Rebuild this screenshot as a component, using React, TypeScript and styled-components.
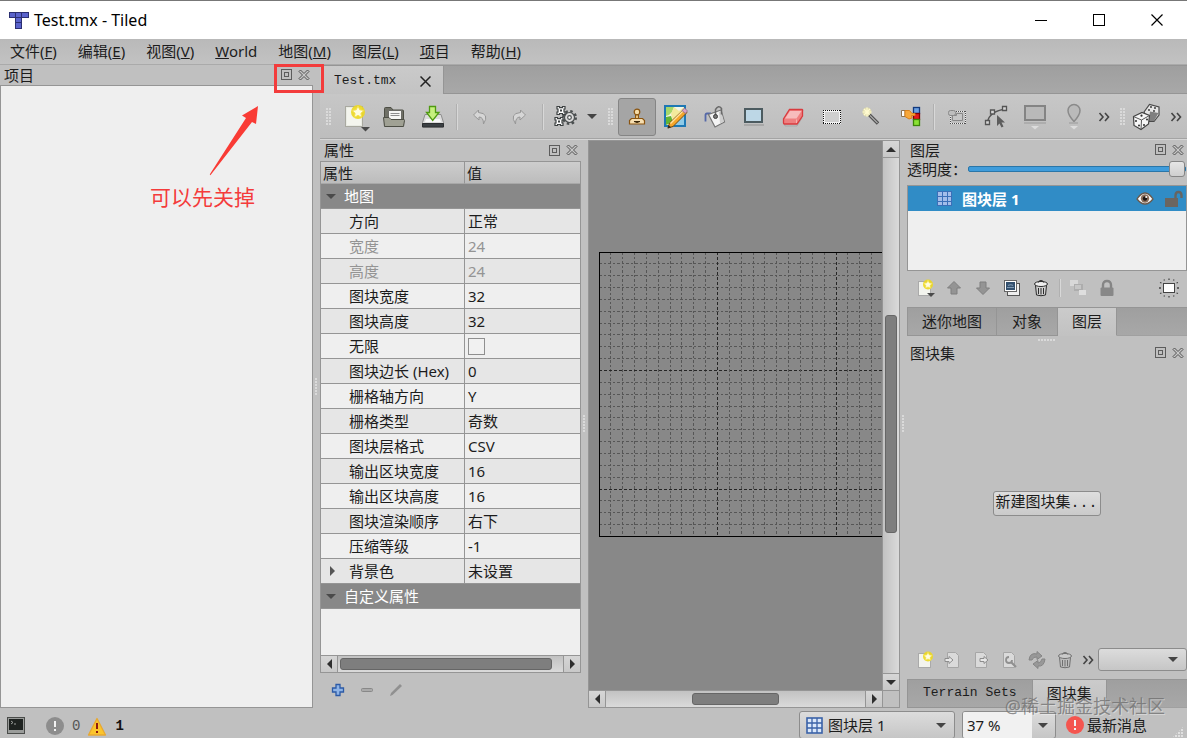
import React from "react";
import styled, { createGlobalStyle, css } from "styled-components";

const ui = `"Noto Sans", "Noto Sans CJK SC", sans-serif`;
const mono = `"Liberation Mono", "Noto Sans CJK SC", monospace`;
const c = {
  bg: "#c0c0c0",
  line: "#959595",
  dark: "#878787",
  text: "#1c1c1c",
  paper: "#efefef",
  blue: "#308cc6",
};

const Global = createGlobalStyle`
  * { box-sizing: border-box; }
  body { margin: 0; background: ${c.bg}; color: ${c.text}; font: 15px/20px ${ui}; }
  button, input, select { font: inherit; color: inherit; margin: 0; padding: 0; border: 0; background: none; border-radius: 0; }
  svg { display: block; flex: none; }
`;

/* ---------- window frame ---------- */
const Window = styled.div`
  display: flex;
  flex-direction: column;
  height: 100vh;
  overflow: hidden;
  position: relative;
`;
const TitleBar = styled.header`
  display: flex;
  align-items: center;
  flex: none;
  height: 39px;
  padding: 0 1px 0 9px;
  border-top: 1px solid #777;
  background: #fff;
  color: #000;
`;
const Caption = styled.h1`
  flex: 1;
  margin: 0 0 0 5px;
  font: 16px/20px ${ui};
`;
const CaptionButton = styled.button`
  display: flex;
  align-items: center;
  justify-content: center;
  width: 58px;
  height: 36px;
`;
const MenuBar = styled.nav`
  display: flex;
  align-items: center;
  flex: none;
  gap: 21px;
  height: 26px;
  padding: 0 10px 2px;
  background: linear-gradient(#b9b9b9, #c2c2c2);
  border-bottom: 1px solid #aaa;
`;
const MenuItem = styled.button`
  height: 22px;
  white-space: nowrap;
`;
const Main = styled.main`
  display: flex;
  flex: 1;
  min-height: 0;
  position: relative;
`;
const Splitter = styled.div<{ $w: number }>`
  flex: none;
  width: ${(p) => p.$w}px;
  display: flex;
  align-items: center;
  justify-content: center;
`;
const Dots = styled.span<{ $w: number; $h: number }>`
  flex: none;
  width: ${(p) => p.$w}px;
  height: ${(p) => p.$h}px;
  background: radial-gradient(circle at 1px 1px, #dadada 1px, transparent 1px) 0 0 / 3px 3px;
`;

/* ---------- docks ---------- */
const Dock = styled.section<{ $w: number }>`
  display: flex;
  flex-direction: column;
  min-height: 0;
  flex: none;
  width: ${(p) => p.$w}px;
`;
const DockTitle = styled.div<{ $h?: number }>`
  display: flex;
  align-items: center;
  flex: none;
  height: ${(p) => p.$h ?? 20}px;
  padding: 0 1px 1px 4px;
`;
const DockName = styled.h2`
  flex: 1;
  margin: 0;
  font: inherit;
`;
const DockButton = styled.button`
  display: flex;
  align-items: center;
  justify-content: center;
  width: 17px;
  height: 16px;
`;
const ProjectBody = styled.div`
  flex: 1;
  background: ${c.paper};
  border: 1px solid ${c.line};
`;
const Editor = styled.div`
  display: flex;
  flex-direction: column;
  flex: 1;
  min-width: 0;
`;
const Work = styled.div`
  display: flex;
  flex: 1;
  min-height: 0;
`;

/* ---------- tabs ---------- */
const TabStrip = styled.div<{ $flip?: boolean }>`
  display: flex;
  flex: none;
  height: 29px;
  background: linear-gradient(#9f9f9f, #a8a8a8);
  border-top: 1px solid ${c.line};
  border-bottom: ${(p) => (p.$flip ? "0" : "1px")} solid ${c.line};
`;
const DocTab = styled.div`
  display: flex;
  align-items: center;
  gap: 21px;
  height: 28px;
  padding: 2px 9px 0 14px;
  background: linear-gradient(#cacaca, #c3c3c3);
  border-right: 1px solid ${c.line};
  font: 13px/20px ${mono};
`;
const Tab = styled.button<{ $on?: boolean; $mono?: boolean; $pad: number }>`
  height: 28px;
  padding: 0 ${(p) => p.$pad}px 2px;
  border-right: 1px solid ${c.line};
  border-bottom: 1px solid ${c.line};
  ${(p) => p.$mono && css`font: 13px/20px ${mono};`}
  ${(p) =>
    p.$on &&
    css`
      background: linear-gradient(#cbcbcb, #c2c2c2);
      border-bottom-color: #c2c2c2;
    `}
`;
const TabFill = styled.span`
  flex: 1;
  border-bottom: 1px solid #a0a0a0;
`;

/* ---------- toolbars ---------- */
const ToolBar = styled.div`
  display: flex;
  align-items: center;
  flex: none;
  gap: 1px;
  height: 46px;
  padding-left: 6px;
  overflow: hidden;
  background: linear-gradient(#c7c7c7, #bdbdbd);
  border-bottom: 1px solid #d6d6d6;
  box-shadow: inset 0 -1px #a4a4a4;
`;
const SmallBar = styled.div<{ $h: number; $left: number }>`
  display: flex;
  align-items: center;
  flex: none;
  gap: 1px;
  height: ${(p) => p.$h}px;
  padding: 0 0 2px ${(p) => p.$left}px;
`;
const ToolButton = styled.button<{ $w?: number; $h?: number; $on?: boolean }>`
  display: flex;
  align-items: center;
  justify-content: center;
  flex: none;
  width: ${(p) => p.$w ?? 38}px;
  height: ${(p) => p.$h ?? 38}px;
  border-radius: 3px;
  ${(p) => p.$on && css`background: #a5a5a5; border: 1px solid #858585;`}
`;
const Sep = styled.span<{ $h?: number }>`
  flex: none;
  width: 7px;
  height: ${(p) => p.$h ?? 26}px;
  background: linear-gradient(90deg, #b0b0b0 1px, #d8d8d8 1px) center / 2px 100% no-repeat;
`;
const GripSlot = styled.span<{ $w: number }>`
  display: flex;
  flex: none;
  width: ${(p) => p.$w}px;
`;
const Spacer = styled.span`
  flex: 1;
`;

/* ---------- properties ---------- */
const PropFrame = styled.div`
  display: flex;
  flex-direction: column;
  flex: 1;
  min-height: 0;
  background: ${c.paper};
  border: 1px solid ${c.line};
`;
const PropTable = styled.table`
  width: 100%;
  border-spacing: 0;
  table-layout: fixed;
`;
const HeadCell = styled.th<{ $w?: number }>`
  width: ${(p) => (p.$w ? p.$w + "px" : "auto")};
  height: 22px;
  padding: 2px 2px 0;
  text-align: left;
  font-weight: 400;
  line-height: 19px;
  background: linear-gradient(#cdcdcd, #bcbcbc);
  border-right: ${(p) => (p.$w ? "1px" : "0")} solid ${c.line};
  border-bottom: 1px solid #a8a8a8;
`;
const GroupCell = styled.th`
  height: 25px;
  padding: 0 0 0 5px;
  text-align: left;
  font-weight: 400;
  color: #fff;
  background: #888;
  border-bottom: 1px solid ${c.line};
`;
const CellRow = styled.span`
  display: flex;
  align-items: center;
  gap: 8px;
`;
const Cell = styled.td<{ $name?: boolean; $off?: boolean; $alt?: boolean }>`
  height: 25px;
  padding: 0 0 0 ${(p) => (p.$name ? 9 : 3)}px;
  white-space: nowrap;
  color: ${(p) => (p.$off ? "#949494" : c.text)};
  background: ${(p) => (p.$alt ? "#e6e6e6" : c.paper)};
  border-bottom: 1px solid ${c.line};
  border-right: ${(p) => (p.$name ? "1px" : "0")} solid ${c.line};
`;
const NameLabel = styled.span<{ $indent: boolean }>`
  display: flex;
  align-items: center;
  gap: 14px;
  padding-left: ${(p) => (p.$indent ? 19 : 0)}px;
`;
const Check = styled.input`
  appearance: none;
  display: block;
  width: 17px;
  height: 17px;
  border: 1px solid #8f8f8f;
  background: #f1f1f1;
`;

/* ---------- scroll bars ---------- */
const Bar = styled.div<{ $v?: boolean }>`
  display: flex;
  flex: none;
  flex-direction: ${(p) => (p.$v ? "column" : "row")};
  ${(p) => (p.$v ? "width: 17px;" : "height: 17px;")}
  background: linear-gradient(${(p) => (p.$v ? "90deg" : "180deg")}, #c2c2c2, #dadada);
  border-${(p) => (p.$v ? "left" : "top")}: 1px solid ${c.line};
`;
const BarButton = styled.button<{ $v?: boolean; $end?: boolean }>`
  display: flex;
  align-items: center;
  justify-content: center;
  flex: none;
  width: ${(p) => (p.$v ? "auto" : "17px")};
  height: ${(p) => (p.$v ? "17px" : "auto")};
  background: linear-gradient(#d6d6d6, #c8c8c8);
  border: 0 solid ${c.line};
  border-${(p) => (p.$v ? (p.$end ? "top" : "bottom") : p.$end ? "left" : "right")}-width: 1px;
`;
const BarSpace = styled.span<{ $n: number }>`
  flex: ${(p) => p.$n} 1 0;
`;
const Thumb = styled.span<{ $n: number }>`
  flex: ${(p) => p.$n} 1 0;
  margin: 2px;
  background: #7e7e7e;
  border: 1px solid #666;
  border-radius: 3px;
`;

/* ---------- map view ---------- */
const MapView = styled.section`
  display: flex;
  flex-direction: column;
  flex: 1;
  min-width: 0;
  border: 1px solid ${c.line};
`;
const MapRow = styled.div`
  display: flex;
  flex: 1;
  min-height: 0;
`;
const MapCanvas = styled.div`
  flex: 1;
  min-width: 0;
  overflow: hidden;
  padding: 111px 0 0 10px;
  background: #888;
`;
const MapFoot = styled.div`
  display: flex;
  & > :first-child { flex: 1; }
`;
const Corner = styled.span`
  width: 17px;
  border: solid ${c.line};
  border-width: 1px 0 0 1px;
`;

/* ---------- layers ---------- */
const OpacityRow = styled.label`
  display: flex;
  align-items: center;
  flex: none;
  gap: 1px;
  height: 18px;
  padding: 0 1px;
`;
const Range = styled.input`
  appearance: none;
  flex: 1;
  min-width: 0;
  height: 18px;
  &::-webkit-slider-runnable-track {
    height: 6px;
    background: #3f9cdb;
    border: 1px solid #2a76a8;
    border-radius: 2px;
  }
  &::-webkit-slider-thumb {
    appearance: none;
    width: 16px;
    height: 16px;
    margin-top: -6px;
    background: linear-gradient(#e6e6e6, #cfcfcf);
    border: 1px solid #858585;
    border-radius: 3px;
  }
`;
const LayerList = styled.div`
  flex: none;
  height: 86px;
  margin: 7px 0 0 1px;
  background: ${c.paper};
  border: 1px solid ${c.line};
`;
const LayerRow = styled.div`
  display: flex;
  align-items: center;
  height: 25px;
  padding: 0 3px 0 29px;
  gap: 10px;
  color: #fff;
  background: ${c.blue};
  font-weight: 700;
`;
const LayerName = styled.span`
  flex: 1;
`;
const TabInset = styled.div<{ $top?: number }>`
  flex: none;
  margin: ${(p) => p.$top ?? 0}px 0 0 1px;
  border-left: 1px solid ${c.line};
`;
const HandleRow = styled.div`
  display: flex;
  justify-content: center;
  flex: none;
  height: 7px;
  padding-top: 3px;
`;
const TilesetArea = styled.div`
  display: flex;
  align-items: center;
  justify-content: center;
  flex: 1;
`;
const PushButton = styled.button`
  width: 108px;
  height: 25px;
  white-space: nowrap;
  background: linear-gradient(#dedede, #cacaca);
  border: 1px solid #8c8c8c;
  border-radius: 3px;
  font-family: ${mono};
`;
const Combo = styled.label<{ $w?: number; $h: number }>`
  display: flex;
  align-items: center;
  flex: ${(p) => (p.$w ? "none" : "1")};
  width: ${(p) => (p.$w ? p.$w + "px" : "auto")};
  height: ${(p) => p.$h}px;
  gap: 5px;
  padding: 0 8px 0 6px;
  background: linear-gradient(#dcdcdc, #c6c6c6);
  border: 1px solid #8c8c8c;
  border-radius: 3px;
`;
const Select = styled.select`
  appearance: none;
  flex: 1;
  min-width: 0;
  outline: 0;
`;

/* ---------- status bar ---------- */
const StatusBar = styled.footer`
  display: flex;
  align-items: center;
  flex: none;
  height: 30px;
  padding: 4px 3px 0 5px;
`;
const StatusButton = styled.button<{ $ml?: number }>`
  display: flex;
  align-items: center;
  gap: 8px;
  height: 26px;
  padding-top: 2px;
  margin-left: ${(p) => p.$ml ?? 0}px;
`;
const Count = styled.span<{ $on?: boolean }>`
  font: ${(p) => (p.$on ? 700 : 400)} 14px/20px ${mono};
  color: ${(p) => (p.$on ? "#111" : "#555")};
`;
const ZoomBox = styled.div`
  display: flex;
  width: 94px;
  height: 28px;
  margin-left: 7px;
  border: 1px solid #8c8c8c;
  border-radius: 3px;
  overflow: hidden;
  background: linear-gradient(#dcdcdc, #c6c6c6);
`;
const ZoomInput = styled.input`
  width: 69px;
  padding-left: 4px;
  background: #f1f1f1;
  outline: 0;
`;
const ZoomDrop = styled.button`
  display: flex;
  flex: 1;
  align-items: center;
  justify-content: center;
`;
const News = styled.a`
  display: flex;
  align-items: center;
  gap: 3px;
  margin-left: 10px;
  color: inherit;
  text-decoration: none;
  white-space: nowrap;
`;
const SizeGrip = styled.span`
  align-self: flex-end;
  width: 12px;
  height: 12px;
  clip-path: polygon(100% 0, 100% 100%, 0 100%);
  background: radial-gradient(circle at 1px 1px, #e0e0e0 1px, transparent 1px) 0 0 / 3px 3px;
`;

/* ---------- annotations ---------- */
const RedBox = styled.div`
  position: absolute;
  left: 274px;
  top: -1px;
  width: 50px;
  height: 29px;
  border: 3px solid #f33c3c;
`;
const RedArrow = styled.div`
  position: absolute;
  left: 208px;
  top: 41px;
`;
const RedText = styled.p`
  position: absolute;
  left: 150px;
  top: 117px;
  margin: 0;
  font-size: 21px;
  line-height: 30px;
  color: #f43b3b;
`;
const Watermark = styled.div`
  position: absolute;
  right: 22px;
  bottom: 20px;
  font-size: 18px;
  line-height: 24px;
  color: rgba(110, 110, 110, 0.75);
  text-shadow: 1px 1px 0 rgba(255, 255, 255, 0.35);
  pointer-events: none;
`;

/* ---------- icons ---------- */
const Svg = ({ s = 24, w, h, children }: { s?: number; w?: number; h?: number; children: React.ReactNode }) => (
  <svg width={w ?? s} height={h ?? s} viewBox={`0 0 ${w ?? s} ${h ?? s}`} fill="none" aria-hidden="true">
    {children}
  </svg>
);
const Tri = ({ dir, s = 5, color = "#2e2e2e" }: { dir: "up" | "down" | "left" | "right"; s?: number; color?: string }) => {
  const v = dir === "up" || dir === "down";
  const d = { up: `M0 ${s}h${2 * s}l-${s}-${s}z`, down: `M0 0h${2 * s}l-${s} ${s}z`, left: `M${s} 0v${2 * s}l-${s}-${s}z`, right: `M0 0v${2 * s}l${s}-${s}z` }[dir];
  return (
    <Svg w={v ? 2 * s : s} h={v ? s : 2 * s}>
      <path d={d} fill={color} />
    </Svg>
  );
};
const TiledLogo = () => (
  <Svg w={20} h={17}>
    <path d="M0 0h20v6h-7v11H6V6H0z" fill="#2b2f72" />
    <path d="M1 1h5v4H1zM7 1h5v4H7zM13 1h6v4h-6zM7 6h5v4H7zM7 11h5v5H7z" fill="#5a63cc" />
  </Svg>
);
const FloatIcon = () => (
  <Svg s={11}>
    <rect x=".5" y=".5" width="10" height="10" stroke="#5c5c5c" />
    <rect x="3.5" y="3.5" width="4" height="4" stroke="#5c5c5c" />
  </Svg>
);
const CloseIcon = () => (
  <Svg s={12}>
    <path d="M1 2.500L2.500 1 6 4.500 9.500 1 11 2.500 7.500 6 11 9.500 9.500 11 6 7.500 2.500 11 1 9.500 4.500 6z" stroke="#505050" fill="#c8c8c8" />
  </Svg>
);
const Star = ({ x, y, r = 7 }: { x: number; y: number; r?: number }) => (
  <g transform={`translate(${x} ${y}) scale(${r / 7})`}>
    <circle r="7" fill="#ecd820" opacity=".9" />
    <path d="M0-6L1.8-2.2 6-1.6 2.9 1.3 3.7 5.4 0 3.4-3.7 5.4-2.9 1.3-6-1.6-1.8-2.2z" fill="#fffde0" stroke="#f4e04a" strokeWidth="1" />
  </g>
);
const NewIcon = () => (
  <Svg w={30} h={30}>
    <rect x="5.500" y="4.500" width="17" height="20" fill="#e9ebe4" stroke="#a9a9a0" />
    <rect x="7" y="6" width="14" height="17" fill="#f4f5ee" />
    <Star x={18} y={10} />
    <path d="M21 25h9l-4.500 4.500z" fill="#4a4a4a" />
  </Svg>
);
const OpenIcon = () => (
  <Svg s={24}>
    <path d="M2.500 20V3.500q0-1 1-1H9l2 2.500h9.500q1 0 1 1V20z" fill="#6f7066" stroke="#4d4e45" />
    <path d="M6.500 5.500h13V16h-13z" fill="#f6f6f4" stroke="#6b6b66" />
    <path d="M8.500 8.500h9M8.500 10.500h9" stroke="#8d8d8d" />
    <path d="M1.500 12.500H7l2 2h13q.5 0 .5 1l-1 6h-19z" fill="#a0a194" stroke="#4d4e45" />
  </Svg>
);
const SaveIcon = () => (
  <Svg s={24}>
    <path d="M4 9.500h16l2.500 8v4.500h-21v-4.500z" fill="#dcdcdc" stroke="#8d8d8d" />
    <path d="M1.500 18.500h21v3.500h-21z" fill="#3b4044" stroke="#2c2f31" />
    <path d="M5 14l-1 3h16l-1-3z" fill="#f8f8f8" />
    <path d="M8.500 1.500h6v6H18l-6.300 8L5.500 7.500h3z" fill="#c6f07e" stroke="#4f9a12" strokeWidth="1.300" />
  </Svg>
);
const UndoIcon = ({ flip }: { flip?: boolean }) => (
  <Svg s={20}>
    <path
      transform={flip ? "matrix(-1 0 0 1 20 0)" : undefined}
      d="M8.500 3L3.500 8l5.500 5v-3q4.500 0 4.500 7 6.500-10.500-5-11.500z"
      fill="#d6d6d6"
      stroke="#979797"
    />
  </Svg>
);
const Gear = ({ x, y, r }: { x: number; y: number; r: number }) => (
  <g transform={`translate(${x} ${y})`}>
    <circle r={r + 0.5} stroke="#4b4f50" strokeWidth="3" strokeDasharray={`${((r + 0.5) * Math.PI) / 8} ${((r + 0.5) * Math.PI) / 8}`} />
    <circle r={r - 0.5} fill="#dadada" stroke="#4b4f50" strokeWidth="1.2" />
    <circle r={r / 3} fill="#fff" stroke="#4b4f50" strokeWidth="1.2" />
  </g>
);
const GearsIcon = () => (
  <Svg s={24}>
    <Gear x={15.500} y={12.500} r={5.500} />
    {[[7, 5.5], [5, 16.5]].map(([x, y]) => (
      <g key={x} transform={`translate(${x} ${y})`}>
        <path d="M-4-4h2.500v1.200h3V-4H4v2.500H3v3h1V4H1.500V3h-3v1H-4V1.500h1v-3h-1z" fill="#fff" stroke="#3d4142" strokeWidth="1.200" />
        <rect x="-1" y="-1" width="2" height="2" fill="#3d4142" />
      </g>
    ))}
  </Svg>
);
const StampIcon = () => (
  <Svg s={18}>
    <circle cx="9" cy="4" r="2.800" fill="#f5dca8" stroke="#8a5410" strokeWidth="1.200" />
    <path d="M7.500 7h3v3.500h-3z" fill="#e7c27c" stroke="#8a5410" />
    <path d="M3.500 10.500h11l2 2v3.500h-15v-3.500z" fill="#f6deb0" stroke="#8a5410" strokeWidth="1.200" />
    <path d="M6 13.500h6l-3 1z" fill="#3a2608" stroke="#3a2608" />
  </Svg>
);
const TerrainIcon = () => (
  <Svg s={26}>
    <rect x="2" y="2" width="20" height="20" fill="#f3f6ea" stroke="#1e78b4" strokeWidth="2" />
    <path d="M3 3h8L9 8 6 11l-3 1z" fill="#a6d86a" />
    <path d="M11 3l5 4 5-4v7l-6 2-5 5-2-7z" fill="#f3ea9d" />
    <path d="M3 13l5-1 2 6-7 3z" fill="#63b434" />
    <path d="M12 15l9-3v9H10z" fill="#8fcbe8" />
    <path d="M5 24l1.500-5L20.500 5.500l3.500 3L10 22.500z" fill="#f5a62b" stroke="#7a4a08" />
    <path d="M7.500 19.500L20 7" stroke="#ffe3a0" strokeWidth="1.500" />
    <path d="M19 6.500l2.500-2.500 3 3-2.200 2.500z" fill="#d8a2c8" stroke="#8d6a86" strokeWidth=".8" />
    <path d="M4.500 24.500l1-3.500 2.500 2.200z" fill="#2a2a2a" />
  </Svg>
);
const BucketIcon = () => (
  <Svg s={24}>
    <path d="M8 8.500H4Q2.500 8.500 2.500 10v6.500" stroke="#5468a8" strokeWidth="1.800" />
    <path d="M5.500 9.500L18 5l3.500 12-9.500 5z" fill="#f4f4f4" stroke="#757575" strokeWidth="1.200" />
    <path d="M16 7l2-1 3 10.500-4 2z" fill="#cfcfcf" />
    <path d="M12.500 11.500V4.500Q15.500-.5 18.500 3.500v6" stroke="#6a6a6a" strokeWidth="1.500" />
    <circle cx="12.500" cy="11.500" r="2" fill="#777" stroke="#3f3f3f" />
  </Svg>
);
const RectIcon = () => (
  <Svg s={22}>
    <rect x="1" y="18" width="20" height="2" fill="#8f8f8f" opacity=".5" />
    <rect x="2" y="3" width="17" height="13" fill="#bdd7e6" stroke="#4c5b60" strokeWidth="2" />
  </Svg>
);
const EraserIcon = () => (
  <Svg s={22}>
    <path d="M2 17.500l1 2.500h12l5-8" stroke="#909090" opacity=".5" />
    <path d="M7.500 3.500h12.500q1 0 .5 1.500v5L15 18H2.500q-1 0-1-1v-4z" fill="#ef8080" stroke="#d93a3e" strokeWidth="1.300" />
    <path d="M8 5h11.500L14.500 12.500H3z" fill="#f7bcbc" />
    <path d="M14.500 13.500V17" stroke="#f8b0b0" />
  </Svg>
);
const MarqueeIcon = () => (
  <Svg s={20}>
    <rect x="2" y="4" width="16" height="12" fill="#cfcfcf" stroke="#f4f4f4" strokeWidth="2" />
    <path d="M1 3.500h18M1 16.500h18M1.500 3v14M18.500 3v14" stroke="#111" strokeDasharray="1 1" />
  </Svg>
);
const WandIcon = () => (
  <Svg s={20}>
    <circle cx="6" cy="5" r="4.500" fill="#f5efa0" opacity=".6" />
    <path d="M6 .5v9M1.500 5h9M3 2l6 6M9 2L3 8" stroke="#fffbd0" strokeWidth="1.200" />
    <path d="M8.500 8l8.500 8.500" stroke="#4b4b4b" strokeWidth="3.400" />
    <path d="M9 8.500l7.500 7.500" stroke="#ababab" strokeWidth="1.200" />
  </Svg>
);
const HandIcon = () => (
  <Svg s={22}>
    <rect x="14.500" y="1.500" width="6" height="6" fill="#6ba0e2" stroke="#12397e" strokeWidth="1.300" />
    <rect x="14.500" y="7.500" width="6" height="6" fill="#e2191c" stroke="#7e0000" strokeWidth="1.300" />
    <rect x="14.500" y="13.500" width="6" height="6" fill="#8be234" stroke="#3d8508" strokeWidth="1.300" />
    <path d="M2.500 4.500H6v6H2.500z" fill="#fff" stroke="#8d7350" />
    <path d="M6 4.500h4.500l2.500 3h3v2h-3.500l.5 2.500-3 1-4-2.500z" fill="#f7a73a" stroke="#d9811a" />
  </Svg>
);
const SelObjIcon = () => (
  <Svg s={22}>
    <path d="M4 5.500h16M4 17.500h16M4.500 5v13M19.500 5v13" stroke="#ececec" />
    <path d="M4 5.500h16M4 17.500h16M4.500 5v13M19.500 5v13" stroke="#505050" strokeDasharray="1 1" />
    <path d="M6.500 14.500v-5h4v-2h6v7z" fill="#c6c6c6" stroke="#888" />
    <rect x="2.500" y="4.500" width="7" height="5" rx="2" fill="#bebebe" stroke="#888" />
  </Svg>
);
const NodesIcon = () => (
  <Svg s={24}>
    <path d="M3.500 17Q5 7 21 4" stroke="#555" strokeWidth="1.300" />
    <path d="M1.500 15.500h4v4h-4zM6.500 5h4v4h-4zM18.500 1.500h4v4h-4z" fill="#d6d6d6" stroke="#555" strokeWidth="1.300" />
    <path d="M13 10v11l2.500-2.500 2 4 2-1-2-4H21z" fill="#5d5d5d" />
  </Svg>
);
const ScreenIcon = () => (
  <Svg w={24} h={30}>
    <path d="M1 21h22" stroke="#adadad" strokeWidth="2" />
    <rect x="2" y="4" width="20" height="14" fill="#b9b9b9" stroke="#848484" strokeWidth="2" />
    <path d="M8 24h8l-4 3.500z" fill="#dcdcdc" />
  </Svg>
);
const PinIcon = () => (
  <Svg w={24} h={30}>
    <path d="M12 19.500Q6 13 6 8.500a6 6 0 0 1 12 0Q18 13 12 19.500z" fill="#bababa" stroke="#8a8a8a" strokeWidth="1.500" />
    <path d="M7 21h9" stroke="#adadad" strokeWidth="2" />
    <path d="M8 24h8l-4 3.500z" fill="#dcdcdc" />
  </Svg>
);
const DiceIcon = () => (
  <Svg s={28}>
    <path d="M12 9l5.500-7.500 9.500 2.500v8l-5 6.500-5 0z" fill="#e6e6e6" stroke="#4a4a4a" strokeWidth="1.200" />
    <path d="M18 8.500l8.500 1.500-4.500 8-5 0z" fill="#7f7f7f" />
    <path d="M1.500 13.500l8.500-4 7.500 3-1 8.500-7.500 5.500-7-4z" fill="#f7f7f7" stroke="#444" strokeWidth="1.200" />
    <path d="M1.500 13.500l8 3.500 8-4.500M9.500 17l-.5 9.500" stroke="#555" />
    <g fill="#2e2e2e">
      <circle cx="9.500" cy="12.700" r="1.100" />
      <circle cx="4" cy="18" r="1" />
      <circle cx="7" cy="22.500" r="1" />
      <circle cx="12" cy="22" r="1" />
      <circle cx="15" cy="16.500" r="1" />
      <circle cx="19" cy="4" r=".9" />
      <circle cx="17" cy="7" r=".9" />
      <circle cx="23" cy="5" r=".9" />
      <circle cx="22" cy="8" r=".9" />
    </g>
  </Svg>
);
const MoreIcon = () => (
  <Svg w={12} h={10}>
    <path d="M1.500 1l3.500 4-3.500 4M7 1l3.500 4L7 9" stroke="#444" strokeWidth="1.600" />
  </Svg>
);
const GridIcon = () => (
  <Svg s={17}>
    <rect x="1" y="1" width="15" height="15" fill="#dbe8fa" stroke="#3a62a8" strokeWidth="1.600" />
    <path d="M6 1v15M11 1v15M1 6h15M1 11h15" stroke="#3a62a8" strokeWidth="1.300" />
  </Svg>
);
const LayerGridIcon = () => (
  <Svg s={15}>
    <rect width="15" height="15" fill="#3b6fb8" />
    <path d="M1 1h4v4H1zM6 1h4v4H6zM11 1h3v4h-3zM1 6h4v4H1zM6 6h4v4H6zM11 6h3v4h-3zM1 11h4v3H1zM6 11h4v3H6zM11 11h3v3h-3z" fill="#a3bdea" />
  </Svg>
);
const EyeIcon = () => (
  <Svg w={18} h={16}>
    <path d="M1 8q8-12 16 0-8 10-16 0z" fill="#fafafa" stroke="#6b5a4c" strokeWidth="1.300" />
    <circle cx="9" cy="7.500" r="4.200" fill="#8a6f5c" />
    <circle cx="9" cy="7.500" r="2.200" fill="#1c1512" />
    <circle cx="10.200" cy="6" r="1" fill="#fff" />
  </Svg>
);
const UnlockIcon = () => (
  <Svg w={19} h={20}>
    <path d="M11.500 11V6.500q0-3.500 3-3.500t3 3.500V9" stroke="#666461" strokeWidth="2.400" />
    <rect x="1" y="9" width="13" height="9" fill="#6b6560" />
  </Svg>
);
const SmallNew = ({ arrow }: { arrow?: boolean }) => (
  <Svg s={20}>
    <rect x="3.500" y="3.500" width="12" height="14" fill="#f3f4ee" stroke="#aaa" />
    <Star x={13} y={6.500} r={5} />
    {arrow && <path d="M12 15h8l-4 4z" fill="#4a4a4a" />}
  </Svg>
);
const ArrowIcon = ({ down }: { down?: boolean }) => (
  <Svg s={18}>
    <path transform={down ? "rotate(180 9 9)" : undefined} d="M9 2.500l6.500 6.500h-3.500v6H6V9H2.500z" fill="#949494" stroke="#7f7f7f" />
  </Svg>
);
const DupIcon = () => (
  <Svg s={18}>
    <rect x="4.500" y="4.500" width="12" height="12" fill="#eee" stroke="#555" />
    <rect x="1.500" y="1.500" width="12" height="11" fill="#fff" stroke="#666" />
    <rect x="3" y="3" width="9" height="8" fill="#33506e" />
    <path d="M4 8.500h7M5 6.500q3-1.500 5 0" stroke="#7f9ab4" strokeWidth="1.200" />
  </Svg>
);
const TrashIcon = ({ dim }: { dim?: boolean }) => (
  <Svg s={18}>
    <g stroke={dim ? "#707070" : "#2b2b2b"} fill={dim ? "#bcbcbc" : "#d0d0d0"}>
      <path d="M3.500 6.500h11l-1 9.500q-4.500 1.500-9 0z" />
      <ellipse cx="9" cy="5" rx="6.500" ry="2.500" fill={dim ? "#cacaca" : "#efefef"} />
      <path d="M6.500 3.500q0-2 2.500-2t2.500 2" fill="none" />
      <path d="M6.500 9v6M9 9v6.500M11.500 9v6" fill="none" />
    </g>
  </Svg>
);
const CopiesIcon = () => (
  <Svg s={18}>
    <path d="M1 1h8v6H1z" fill="#d8d8d8" />
    <path d="M5 5h9v7H5z" fill="#adadad" />
    <path d="M6 6h6v4H6z" fill="#c6c6c6" />
    <path d="M10 11h7v5h-7z" fill="#dedede" />
  </Svg>
);
const LockIcon = () => (
  <Svg s={18}>
    <path d="M5 9V6q0-4 4-4t4 4v3" stroke="#858585" strokeWidth="2.400" />
    <rect x="2.500" y="8.500" width="13" height="8.500" rx="1" fill="#888" />
  </Svg>
);
const HighlightIcon = () => (
  <Svg s={22}>
    <rect x="5.500" y="6.500" width="11" height="9" fill="#fff" stroke="#444" />
    <path d="M11 1.500v1.500M6 2.500l.5 1M16 2.500l-.5 1M2 5.500l1.500.5M20 5.500l-1.500.5M1 11h2M19 11h2M2 16.500l1.500-.5M20 16.500l-1.500-.5M6 19.500l.5-1M16 19.500l-.5-1M11 19v1.500" stroke="#444" strokeWidth="1.300" />
  </Svg>
);
const Page = ({ children }: { children: React.ReactNode }) => (
  <Svg s={18}>
    <path d="M3.500 1.500h8l3 3v12h-11z" fill="#dadada" stroke="#a6a6a6" />
    {children}
  </Svg>
);
const RefreshIcon = () => (
  <Svg s={20}>
    <path d="M2 10Q3 2 10 4V1.500l5 4.500-5 3.500V7Q6 6.500 5 10z" fill="#989898" stroke="#858585" />
    <path d="M18 9q-1 8-7 7v2.500l-5-4.500 5-3.500V13q3 0 4-4z" fill="#989898" stroke="#858585" />
  </Svg>
);
const AlertIcon = ({ color }: { color: string }) => (
  <Svg s={18}>
    <circle cx="9" cy="9" r="9" fill={color} />
    <path d="M9 4v6M9 12v2" stroke="#f2f2f2" strokeWidth="2" />
  </Svg>
);

/* ---------- data ---------- */
type Prop = { name: string; value?: string; off?: boolean; check?: boolean; more?: boolean };
const props: Prop[] = [
  { name: "方向", value: "正常" },
  { name: "宽度", value: "24", off: true },
  { name: "高度", value: "24", off: true },
  { name: "图块宽度", value: "32" },
  { name: "图块高度", value: "32" },
  { name: "无限", check: true },
  { name: "图块边长 (Hex)", value: "0" },
  { name: "栅格轴方向", value: "Y" },
  { name: "栅格类型", value: "奇数" },
  { name: "图块层格式", value: "CSV" },
  { name: "输出区块宽度", value: "16" },
  { name: "输出区块高度", value: "16" },
  { name: "图块渲染顺序", value: "右下" },
  { name: "压缩等级", value: "-1" },
  { name: "背景色", value: "未设置", more: true },
];
const menus: [string, string, string][] = [
  ["文件(", "F", ")"],
  ["编辑(", "E", ")"],
  ["视图(", "V", ")"],
  ["", "W", "orld"],
  ["地图(", "M", ")"],
  ["图层(", "L", ")"],
  ["", "项", "目"],
  ["帮助(", "H", ")"],
];

const DockHeader = ({ name, h }: { name: string; h?: number }) => (
  <DockTitle $h={h}>
    <DockName>{name}</DockName>
    <DockButton aria-label="浮动"><FloatIcon /></DockButton>
    <DockButton aria-label="关闭"><CloseIcon /></DockButton>
  </DockTitle>
);

const ScrollBar = ({ v, parts }: { v?: boolean; parts: [number, number, number] }) => (
  <Bar $v={v}>
    <BarButton $v={v} aria-label="向前"><Tri dir={v ? "up" : "left"} /></BarButton>
    <BarSpace $n={parts[0]} />
    <Thumb $n={parts[1]} />
    <BarSpace $n={parts[2]} />
    <BarButton $v={v} $end aria-label="向后"><Tri dir={v ? "down" : "right"} /></BarButton>
  </Bar>
);

const TILE = 11.85;
const MapGrid = () => {
  const size = Math.round(TILE * 24);
  return (
    <Svg s={size + 1}>
      {Array.from({ length: 23 }, (_, k) => {
        const p = Math.floor(TILE * (k + 1)) + 0.5;
        const major = (k + 1) % 10 === 0;
        return (
          <path
            key={k}
            d={`M${p} 0V${size}M0 ${p}H${size}`}
            stroke={major ? "#262626" : "#565656"}
            strokeDasharray={major ? "3 2" : "3 2 2 2"}
          />
        );
      })}
      <rect x=".5" y=".5" width={size} height={size} stroke="#000" />
    </Svg>
  );
};

export default function App() {
  return (
    <Window>
      <Global />
      <TitleBar>
        <TiledLogo />
        <Caption>Test.tmx - Tiled</Caption>
        <CaptionButton aria-label="最小化"><Svg s={12}><path d="M0 6.500h12" stroke="#000" /></Svg></CaptionButton>
        <CaptionButton aria-label="最大化"><Svg s={12}><rect x=".5" y=".5" width="11" height="11" stroke="#000" /></Svg></CaptionButton>
        <CaptionButton aria-label="关闭窗口"><Svg s={12}><path d="M.5.5l11 11M11.500.5l-11 11" stroke="#000" strokeWidth="1.200" /></Svg></CaptionButton>
      </TitleBar>
      <MenuBar>
        {menus.map(([a, b, d]) => (
          <MenuItem key={a + b + d}>{a}<u>{b}</u>{d}</MenuItem>
        ))}
      </MenuBar>

      <Main>
        <Dock $w={313}>
          <DockHeader name="项目" />
          <ProjectBody />
        </Dock>
        <Splitter $w={7}><Dots $w={3} $h={18} /></Splitter>

        <Editor>
          <TabStrip>
            <DocTab>
              Test.tmx
              <DockButton aria-label="关闭标签"><Svg s={11}><path d="M.5.5l10 10M10.500.5l-10 10" stroke="#222" strokeWidth="1.500" /></Svg></DockButton>
            </DocTab>
          </TabStrip>
          <ToolBar role="toolbar">
            <GripSlot $w={9}><Dots $w={5} $h={18} /></GripSlot>
            <ToolButton aria-label="新建"><NewIcon /></ToolButton>
            <ToolButton aria-label="打开"><OpenIcon /></ToolButton>
            <ToolButton aria-label="保存"><SaveIcon /></ToolButton>
            <Sep />
            <ToolButton aria-label="撤销"><UndoIcon /></ToolButton>
            <ToolButton aria-label="重做"><UndoIcon flip /></ToolButton>
            <Sep />
            <ToolButton aria-label="命令"><GearsIcon /></ToolButton>
            <ToolButton $w={11} aria-label="命令菜单"><Tri dir="down" color="#444" /></ToolButton>
            <GripSlot $w={19}><Spacer /><Dots $w={5} $h={18} /><GripSlot $w={4} /></GripSlot>
            <ToolButton $on aria-label="图章刷"><StampIcon /></ToolButton>
            <ToolButton aria-label="地形刷"><TerrainIcon /></ToolButton>
            <ToolButton aria-label="填充"><BucketIcon /></ToolButton>
            <ToolButton aria-label="矩形"><RectIcon /></ToolButton>
            <ToolButton aria-label="橡皮擦"><EraserIcon /></ToolButton>
            <ToolButton aria-label="矩形选择"><MarqueeIcon /></ToolButton>
            <ToolButton aria-label="魔棒"><WandIcon /></ToolButton>
            <ToolButton aria-label="同色选择"><HandIcon /></ToolButton>
            <Sep />
            <ToolButton aria-label="选择对象"><SelObjIcon /></ToolButton>
            <ToolButton aria-label="编辑多边形"><NodesIcon /></ToolButton>
            <ToolButton aria-label="插入矩形"><ScreenIcon /></ToolButton>
            <ToolButton aria-label="插入点"><PinIcon /></ToolButton>
            <ToolButton $w={20} aria-label="更多工具"><MoreIcon /></ToolButton>
            <GripSlot $w={11}><GripSlot $w={5} /><Dots $w={5} $h={18} /></GripSlot>
            <ToolButton aria-label="随机"><DiceIcon /></ToolButton>
            <ToolButton $w={20} aria-label="更多"><MoreIcon /></ToolButton>
          </ToolBar>

          <Work>
            <Dock $w={261}>
              <DockHeader name="属性" h={21} />
              <PropFrame>
                <PropTable>
                  <thead>
                    <tr><HeadCell $w={144}>属性</HeadCell><HeadCell>值</HeadCell></tr>
                  </thead>
                  <tbody>
                    <tr><GroupCell colSpan={2}><CellRow><Tri dir="down" color="#4a4a4a" /><span>地图</span></CellRow></GroupCell></tr>
                    {props.map((p, i) => (
                      <tr key={p.name}>
                        <Cell $name $off={p.off} $alt={i % 2 === 0}>
                          <NameLabel $indent={!p.more}>
                            {p.more && <Tri dir="right" color="#555" />}
                            {p.check ? <label htmlFor="infinite">{p.name}</label> : <span>{p.name}</span>}
                          </NameLabel>
                        </Cell>
                        <Cell $off={p.off} $alt={i % 2 === 0}>
                          {p.check ? <Check type="checkbox" id="infinite" /> : p.value}
                        </Cell>
                      </tr>
                    ))}
                    <tr><GroupCell colSpan={2}><CellRow><Tri dir="down" color="#4a4a4a" /><span>自定义属性</span></CellRow></GroupCell></tr>
                  </tbody>
                </PropTable>
                <Spacer />
                <ScrollBar parts={[0, 209, 9]} />
              </PropFrame>
              <SmallBar $h={35} $left={4}>
                <ToolButton $w={28} $h={28} aria-label="添加属性"><Svg s={14}><path d="M5 1.500h4V5h3.500v4H9v3.500H5V9H1.500V5H5z" fill="#8fb4e6" stroke="#2c5aa6" strokeWidth="1.300" /></Svg></ToolButton>
                <ToolButton $w={28} $h={28} aria-label="删除属性"><Svg s={14}><rect x="1.500" y="5.500" width="11" height="3" rx="1" fill="#aaa" stroke="#888" /></Svg></ToolButton>
                <ToolButton $w={28} $h={28} aria-label="重命名"><Svg s={14}><path d="M1 13l1-3L11 1l2 2-9.500 9z" fill="#909090" /></Svg></ToolButton>
              </SmallBar>
            </Dock>
            <Splitter $w={7}><Dots $w={3} $h={18} /></Splitter>

            <MapView aria-label="地图">
              <MapRow>
                <MapCanvas><MapGrid /></MapCanvas>
                <ScrollBar v parts={[157, 218, 140]} />
              </MapRow>
              <MapFoot>
                <ScrollBar parts={[86, 88, 86]} />
                <Corner />
              </MapFoot>
            </MapView>
            <Splitter $w={6}><Dots $w={3} $h={18} /></Splitter>

            <Dock $w={281}>
              <DockHeader name="图层" />
              <OpacityRow>
                透明度：
                <Range type="range" min={0} max={100} defaultValue={100} />
              </OpacityRow>
              <LayerList>
                <LayerRow>
                  <LayerGridIcon />
                  <LayerName>图块层 1</LayerName>
                  <EyeIcon />
                  <UnlockIcon />
                </LayerRow>
              </LayerList>
              <SmallBar $h={36} $left={5}>
                <ToolButton $w={28} $h={28} aria-label="新建图层"><SmallNew arrow /></ToolButton>
                <ToolButton $w={28} $h={28} aria-label="上移"><ArrowIcon /></ToolButton>
                <ToolButton $w={28} $h={28} aria-label="下移"><ArrowIcon down /></ToolButton>
                <ToolButton $w={28} $h={28} aria-label="复制图层"><DupIcon /></ToolButton>
                <ToolButton $w={28} $h={28} aria-label="删除图层"><TrashIcon /></ToolButton>
                <Sep $h={18} />
                <ToolButton $w={28} $h={28} aria-label="其他图层可见"><CopiesIcon /></ToolButton>
                <ToolButton $w={28} $h={28} aria-label="锁定其他图层"><LockIcon /></ToolButton>
                <Spacer />
                <ToolButton $w={36} $h={28} aria-label="高亮当前图层"><HighlightIcon /></ToolButton>
              </SmallBar>
              <TabInset>
                <TabStrip $flip>
                  <Tab $pad={14}>迷你地图</Tab>
                  <Tab $pad={15}>对象</Tab>
                  <Tab $pad={14} $on>图层</Tab>
                  <TabFill />
                </TabStrip>
              </TabInset>
              <HandleRow><Dots $w={18} $h={3} /></HandleRow>
              <DockHeader name="图块集" />
              <TilesetArea>
                <PushButton>新建图块集...</PushButton>
              </TilesetArea>
              <SmallBar $h={33} $left={5}>
                <ToolButton $w={27} $h={27} aria-label="新建图块集"><SmallNew /></ToolButton>
                <ToolButton $w={27} $h={27} aria-label="嵌入"><Page><path d="M1 7.500h4v-2l4 3.500-4 3.500v-2H1z" fill="#e8e8e8" stroke="#8d8d8d" /></Page></ToolButton>
                <ToolButton $w={27} $h={27} aria-label="导出"><Page><path d="M8 7.500h4v-2l4 3.500-4 3.500v-2H8z" fill="#e8e8e8" stroke="#8d8d8d" /></Page></ToolButton>
                <ToolButton $w={27} $h={27} aria-label="编辑"><Page><path d="M9 6a3 3 0 1 0 3 3" stroke="#909090" strokeWidth="1.800" /><path d="M11 11l5 5" stroke="#909090" strokeWidth="2.200" /></Page></ToolButton>
                <ToolButton $w={27} $h={27} aria-label="替换"><RefreshIcon /></ToolButton>
                <ToolButton $w={27} $h={27} aria-label="移除"><TrashIcon dim /></ToolButton>
                <ToolButton $w={18} $h={27} aria-label="更多"><MoreIcon /></ToolButton>
                <Combo $h={23}>
                  <Select aria-label="图块集缩放" />
                  <Tri dir="down" color="#444" />
                </Combo>
              </SmallBar>
              <TabInset $top={2}>
                <TabStrip $flip>
                  <Tab $pad={15} $mono>Terrain Sets</Tab>
                  <Tab $pad={14} $on>图块集</Tab>
                  <TabFill />
                </TabStrip>
              </TabInset>
            </Dock>
          </Work>
        </Editor>

        <RedBox />
        <RedArrow>
          <Svg w={52} h={72}>
            <path d="M50 0L48 18l-4-2L3 68.500q-1.500 1.500-1-.5L38 12l-4-2.500z" fill="#f93b35" />
          </Svg>
        </RedArrow>
        <RedText>可以先关掉</RedText>
      </Main>

      <StatusBar>
        <StatusButton aria-label="控制台">
          <Svg w={22} h={18}>
            <rect x="2.500" y=".5" width="17" height="16" fill="#9a9c9a" stroke="#4a4c4a" />
            <rect x="4" y="2" width="14" height="11" fill="#1e2220" />
            <path d="M6 4l2 1.500L6 7M9 7h2" stroke="#9da09d" />
          </Svg>
        </StatusButton>
        <StatusButton $ml={19}><AlertIcon color="#8d8d8d" /><Count>0</Count></StatusButton>
        <StatusButton $ml={7}>
          <Svg w={20} h={19}>
            <path d="M10 1.500L18.500 18h-17z" fill="#fbc52c" stroke="#e8a830" strokeWidth="1.300" strokeLinejoin="round" />
            <path d="M10 6v6M10 14v2" stroke="#8c1a10" strokeWidth="2" />
          </Svg>
          <Count $on>1</Count>
        </StatusButton>
        <Spacer />
        <Combo $w={156} $h={28}>
          <GridIcon />
          <Select aria-label="当前图层"><option>图块层 1</option></Select>
          <Tri dir="down" color="#444" />
        </Combo>
        <ZoomBox>
          <ZoomInput aria-label="缩放" defaultValue="37 %" />
          <ZoomDrop aria-label="缩放列表"><Tri dir="down" color="#444" /></ZoomDrop>
        </ZoomBox>
        <News href="#news"><AlertIcon color="#f4554f" />最新消息</News>
        <GripSlot $w={25} />
        <SizeGrip />
      </StatusBar>
      <Watermark>@稀土掘金技术社区</Watermark>
    </Window>
  );
}
